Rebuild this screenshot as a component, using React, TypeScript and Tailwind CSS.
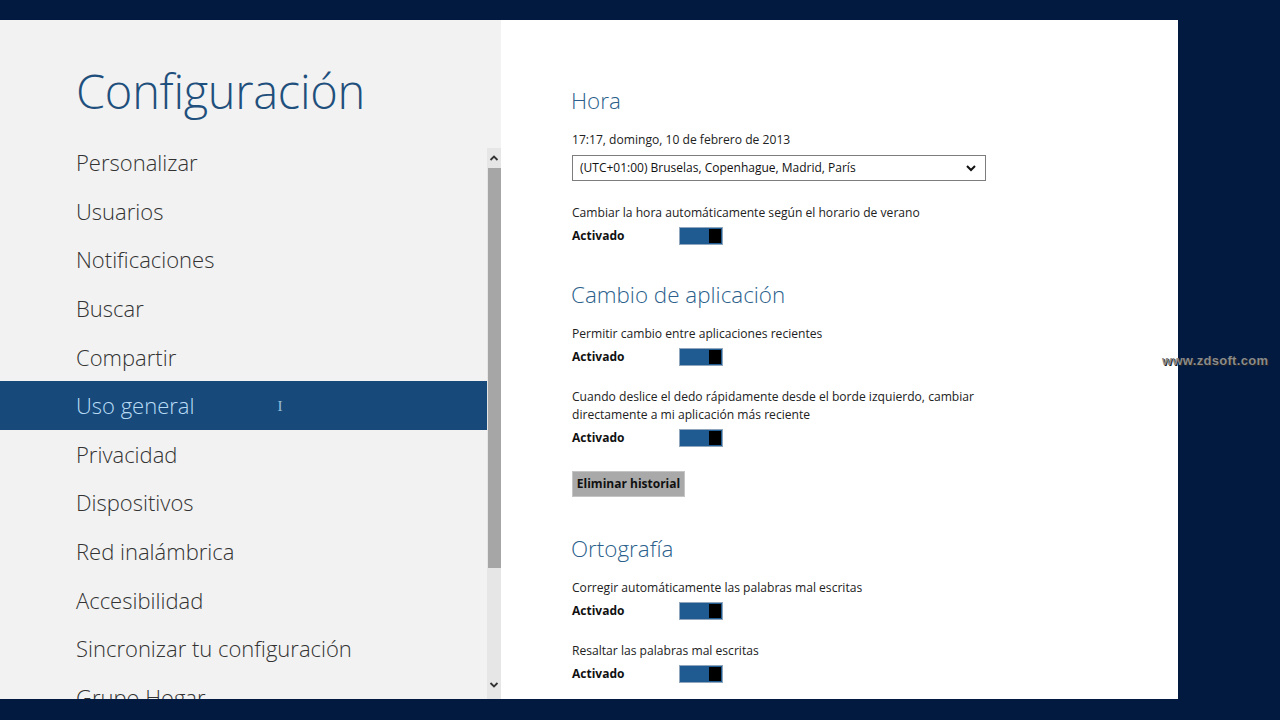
import React from 'react';

const menu = [
  'Personalizar',
  'Usuarios',
  'Notificaciones',
  'Buscar',
  'Compartir',
  'Uso general',
  'Privacidad',
  'Dispositivos',
  'Red inalámbrica',
  'Accesibilidad',
  'Sincronizar tu configuración',
  'Grupo Hogar',
];

const font = { fontFamily: '"Segoe UI", "Open Sans", "Noto Sans", sans-serif' };

function Toggle() {
  return (
    <div className="w-[44px] h-[18px] border border-[#8fa6bd] bg-[#1f5a91] flex justify-end p-[1px]">
      <div className="w-[12px] h-full bg-black" />
    </div>
  );
}

function Setting({ label, last }: { label: React.ReactNode; last?: boolean }) {
  return (
    <div className={last ? '' : 'mb-[17px]'}>
      <div className="text-[12.1px] leading-[18px] text-[#222]">{label}</div>
      <div className="flex items-center h-[28px]">
        <div className="w-[107px] text-[12px] font-bold text-[#111]">Activado</div>
        <Toggle />
      </div>
    </div>
  );
}

function Heading({ children }: { children: React.ReactNode }) {
  return <div className="text-[22.4px] font-light text-[#2c5f8c] leading-[30px] mb-[15px]">{children}</div>;
}

export default function App() {
  return (
    <div className="w-[1280px] h-[720px] bg-[#031a40] flex flex-col overflow-hidden relative" style={font}>
      <div className="h-[20px] shrink-0" />
      <div className="flex h-[679px] shrink-0">
        {/* left pane */}
        <div className="w-[501px] bg-[#f2f2f2] flex overflow-hidden">
          <div className="w-[487px]">
            <div className="h-[118.5px] pt-[59px] pl-[76px] text-[47px] leading-[24px] font-light text-[#1f4f7c] tracking-[-0.3px]">
              Configuración
            </div>
            {menu.map((m) => (
              <div
                key={m}
                className={
                  m === 'Uso general'
                    ? 'h-[48.6px] flex items-center pl-[76px] text-[22px] font-light bg-[#174a7a] text-[#b9dcf6]'
                    : 'h-[48.6px] flex items-center pl-[76px] text-[22px] font-light text-[#333]'
                }
              >
                {m}
                {m === 'Uso general' && (
                  <span
                    className="ml-[83px] text-[15px] text-[#9cc0dd]"
                    style={{ fontFamily: '"Liberation Serif", serif' }}
                  >
                    I
                  </span>
                )}
              </div>
            ))}
          </div>
          <div className="w-[14px] flex flex-col pt-[128px] bg-[#f2f2f2]">
            <div className="flex-1 bg-[#e6e6e6] flex flex-col items-center">
              <svg width="12" height="20" viewBox="0 0 12 20" className="shrink-0">
                <path d="M2.5 12 L6 8.5 L9.5 12" fill="none" stroke="#333" strokeWidth="1.8" />
              </svg>
              <div className="w-[13px] h-[400px] bg-[#a6a6a6] shrink-0" />
              <div className="flex-1" />
              <svg width="12" height="22" viewBox="0 0 12 22" className="shrink-0 mb-[2px]">
                <path d="M2.5 8 L6 11.5 L9.5 8" fill="none" stroke="#333" strokeWidth="1.8" />
              </svg>
            </div>
          </div>
        </div>
        {/* right pane */}
        <div className="w-[677px] bg-white pl-[70px] pt-[66px]">
          <Heading>Hora</Heading>
          <div className="text-[12.1px] leading-[18px] text-[#222] ml-[1px]">17:17, domingo, 10 de febrero de 2013</div>
          <div className="mt-[6px] w-[414px] h-[26px] border border-[#7d7d7d] flex items-center justify-between pl-[7px] pr-[8px] text-[12px] text-[#111] ml-[1px]">
            <span>(UTC+01:00) Bruselas, Copenhague, Madrid, París</span>
            <svg width="12" height="10" viewBox="0 0 12 10">
              <path d="M2 3 L6 7 L10 3" fill="none" stroke="#111" strokeWidth="2" />
            </svg>
          </div>
          <div className="mt-[23px] ml-[1px]">
            <Setting label="Cambiar la hora automáticamente según el horario de verano" last />
          </div>
          <div className="mt-[30px]">
            <Heading>Cambio de aplicación</Heading>
            <div className="ml-[1px]">
              <Setting label="Permitir cambio entre aplicaciones recientes" />
              <Setting
                last
                label={
                  <>
                    Cuando deslice el dedo rápidamente desde el borde izquierdo, cambiar
                    <br />
                    directamente a mi aplicación más reciente
                  </>
                }
              />
              <div className="w-[113px] h-[26px] bg-[#a9a9a9] border border-[#c4c4c4] flex items-center justify-center text-[12px] font-bold text-[#111] mt-[19px]">
                Eliminar historial
              </div>
            </div>
          </div>
          <div className="mt-[37px]">
            <Heading>Ortografía</Heading>
            <div className="ml-[1px]">
              <Setting label="Corregir automáticamente las palabras mal escritas" />
              <Setting label="Resaltar las palabras mal escritas" last />
            </div>
          </div>
        </div>
        <div className="flex-1" />
      </div>
      <div
        className="absolute left-[1162px] top-[351px] text-[13px] font-bold text-[#8a8a8a] tracking-[0.3px]"
        style={{ fontFamily: '"Liberation Sans", Arial, sans-serif', textShadow: '1px 1px 0 #222' }}
      >
        www.zdsoft.com
      </div>
    </div>
  );
}
